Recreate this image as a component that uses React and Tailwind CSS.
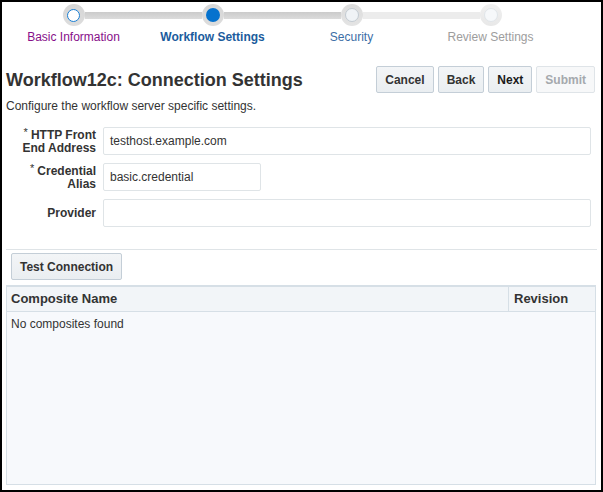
import React from "react";

const steps = [
  { label: "Basic Information", state: "visited" },
  { label: "Workflow Settings", state: "current" },
  { label: "Security", state: "next" },
  { label: "Review Settings", state: "disabled" },
];

function Circle({ state }) {
  const ring =
    state === "disabled"
      ? "bg-gradient-to-b from-[#f0f0f0] to-[#e8e8e8]"
      : state === "next"
      ? "bg-gradient-to-b from-[#dcdcdc] to-[#e4e4e4]"
      : "bg-gradient-to-b from-[#d6d6d6] to-[#dddddd]";
  let inner = "";
  if (state === "visited") inner = "w-[13px] h-[13px] bg-white border border-[#1a7fd4]";
  else if (state === "current") inner = "w-[14px] h-[14px] bg-[#0572ce]";
  else if (state === "next") inner = "w-[14px] h-[14px] bg-[#f0f3f6] border border-[#c3cbd2]";
  else inner = "w-[14px] h-[14px] bg-[#f6f8fa] border border-[#e0e5e9]";
  return (
    <div className={`w-[22px] h-[22px] rounded-full flex items-center justify-center shrink-0 ${ring}`}>
      <div className={`rounded-full ${inner}`} />
    </div>
  );
}

function Step({ step, i }) {
  const dark = "bg-gradient-to-b from-[#cbcbcb] to-[#dcdcdc]";
  const light = "bg-[#ececec]";
  const leftBar = i === 0 ? "" : i <= 2 ? dark : light;
  const rightBar = i === 3 ? "" : i <= 1 ? dark : light;
  const labelCls =
    step.state === "visited"
      ? "text-[#87108a]"
      : step.state === "current"
      ? "text-[#1b5c9d] font-bold"
      : step.state === "next"
      ? "text-[#3c6ea6]"
      : "text-[#9d9d9d]";
  return (
    <div className="flex flex-col items-center">
      <div className="w-full h-[22px] flex items-center">
        <div className={`flex-1 h-[7px] ${leftBar}`} />
        <Circle state={step.state} />
        <div className={`flex-1 h-[7px] ${rightBar}`} />
      </div>
      <div className={`mt-[4px] text-[12px] leading-[14px] whitespace-nowrap ${labelCls}`}>{step.label}</div>
    </div>
  );
}

function Btn({ children, disabled, dark }) {
  return (
    <button
      className={`h-[27px] px-[8px] rounded-[2px] border text-[12px] font-bold leading-none ${
        disabled
          ? "bg-[#f7f8f9] border-[#dfe4e8] text-[#a5a9ad]"
          : `bg-gradient-to-b from-[#f3f5f7] to-[#eaeef1] border-[#c4ced7] ${dark ? "text-[#1a1a1a]" : "text-[#333333]"}`
      }`}
    >
      {children}
    </button>
  );
}

function Label({ req, lines }) {
  return (
    <div className="w-[94px] shrink-0 text-right text-[12px] font-bold text-[#333333]">
      {lines.map((l, idx) => (
        <div key={idx} className="h-[14px] leading-[14px] overflow-visible">
          {req && idx === 0 && (
            <span className="font-normal text-[11px] leading-none align-[3px] mr-[3px]">*</span>
          )}
          {l}
        </div>
      ))}
    </div>
  );
}

function Field({ value, w }) {
  return (
    <div
      className={`${w} h-[28px] ml-[7px] border border-[#dfe4e7] rounded-[2px] bg-white flex items-center pl-[6px] text-[12px] text-[#333333]`}
    >
      {value}
    </div>
  );
}

export default function App() {
  return (
    <div className="w-[603px] h-[492px] border-2 border-black bg-white flex flex-col font-['Liberation_Sans',Arial,sans-serif] text-[#333333]">
      <div className="grid grid-cols-[139px_139px_139px_139px] ml-[2px] mt-[2px]">
        {steps.map((s, i) => (
          <Step key={s.label} step={s} i={i} />
        ))}
      </div>

      <div className="flex items-center justify-between pl-[4px] pr-[6px] mt-[22px]">
        <div className="text-[18px] font-bold leading-[22px] text-[#333333]">Workflow12c: Connection Settings</div>
        <div className="flex gap-[4px]">
          <Btn>Cancel</Btn>
          <Btn>Back</Btn>
          <Btn dark>Next</Btn>
          <Btn disabled>Submit</Btn>
        </div>
      </div>

      <div className="pl-[4px] mt-[6px] text-[12px] leading-[14px]">Configure the workflow server specific settings.</div>

      <div className="flex flex-col gap-[8px] mt-[14px]">
        <div className="flex items-center h-[28px]">
          <Label req lines={["HTTP Front", "End Address"]} />
          <Field value="testhost.example.com" w="w-[488px]" />
        </div>
        <div className="flex items-center h-[28px]">
          <Label req lines={["Credential", "Alias"]} />
          <Field value="basic.credential" w="w-[158px]" />
        </div>
        <div className="flex items-center h-[28px]">
          <Label lines={["Provider"]} />
          <Field value="" w="w-[488px]" />
        </div>
      </div>

      <div className="mt-[22px] mx-[4px] h-px bg-[#dfe4e7]" />

      <div className="mt-[3px] ml-[9px]">
        <Btn>Test Connection</Btn>
      </div>

      <div className="mt-[5px] ml-[4px] w-[590px] flex-1 mb-[5px] border border-t-2 border-[#d6dfe6] bg-[#f7f9fc] flex flex-col">
        <div className="h-[25px] flex bg-[#f2f5f8] border-b border-[#d6dfe6] text-[13px] font-bold">
          <div className="flex-1 flex items-center pl-[4px]">Composite Name</div>
          <div className="w-[87px] border-l border-[#d6dfe6] flex items-center pl-[5px]">Revision</div>
        </div>
        <div className="pl-[4px] pt-[5px] text-[12px] leading-[14px]">No composites found</div>
      </div>
    </div>
  );
}
